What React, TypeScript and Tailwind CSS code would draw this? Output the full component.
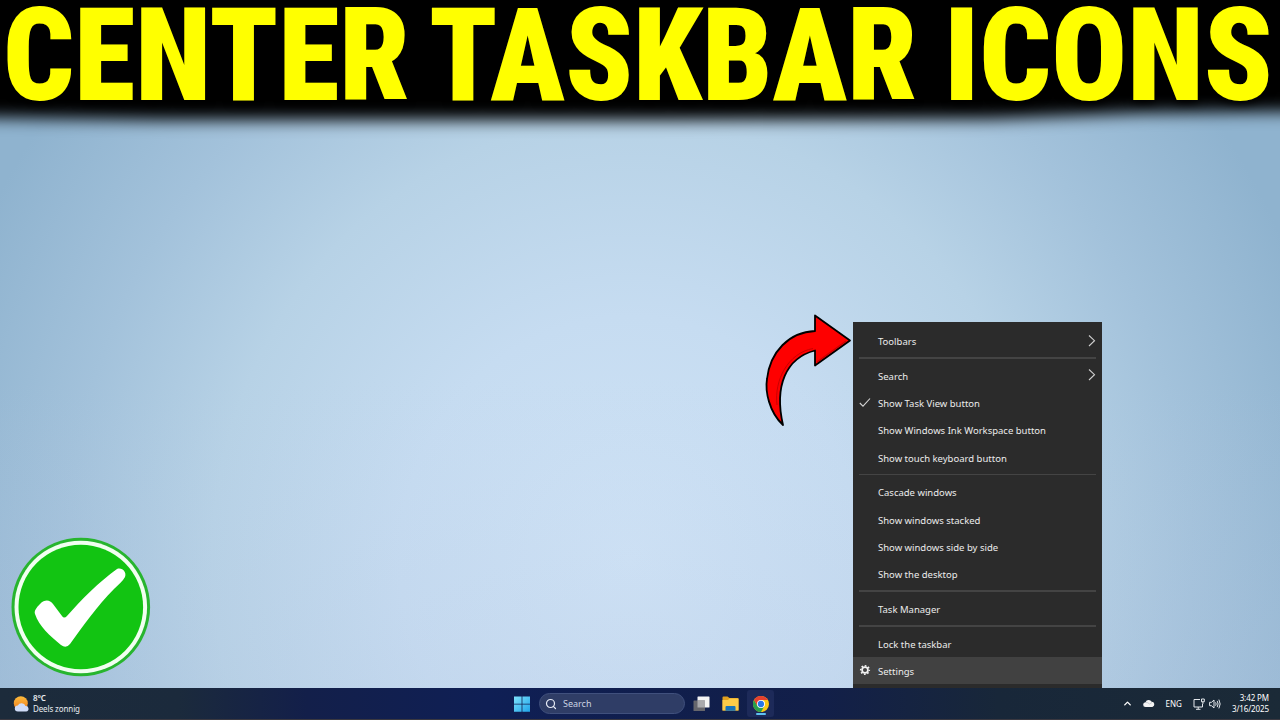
import React from 'react';
import { ChevronUp, Search } from 'lucide-react';

interface MenuEntry {
  label: string;
  submenu?: boolean;
  checked?: boolean;
  active?: boolean;
}

const MENU_GROUPS: MenuEntry[][] = [
  [{ label: 'Toolbars', submenu: true }],
  [
    { label: 'Search', submenu: true },
    { label: 'Show Task View button', checked: true },
    { label: 'Show Windows Ink Workspace button' },
    { label: 'Show touch keyboard button' },
  ],
  [
    { label: 'Cascade windows' },
    { label: 'Show windows stacked' },
    { label: 'Show windows side by side' },
    { label: 'Show the desktop' },
  ],
  [{ label: 'Task Manager' }],
  [{ label: 'Lock the taskbar' }, { label: 'Settings', active: true }],
];

const GearIcon = () => (
  <svg width="12" height="12" viewBox="0 0 12 12" fill="none" stroke="#f2f2f2">
    <circle cx="6" cy="6" r="2.9" strokeWidth="1.7" />
    <circle cx="6" cy="6" r="4.3" strokeWidth="1.6" strokeDasharray="1.69 1.69" strokeDashoffset="0.84" />
  </svg>
);

const TickIcon = () => (
  <svg width="12" height="12" viewBox="0 0 12 12" fill="none" stroke="#d4d4d4" strokeWidth="1.1">
    <path d="M.8 6 L4 9.200 L11 1.500" />
  </svg>
);

const MenuRow: React.FC<{ entry: MenuEntry }> = ({ entry }) => (
  <div className={`flex h-[27.3px] items-center pr-[5px] ${entry.active ? 'bg-[#414141]' : ''}`}>
    <span className="flex w-[25px] shrink-0 items-center pl-[6px]">
      {entry.checked && <TickIcon />}
      {entry.active && <GearIcon />}
    </span>
    <span className="flex-1 pt-[2.2px] text-[9.5px] leading-none text-[#ececec]">{entry.label}</span>
    {entry.submenu && (
      <svg width="10" height="14" viewBox="0 0 10 14" fill="none" stroke="#cfcfcf" strokeWidth="1.1">
        <path d="M2 1.500 L7.500 6.700 L2 12" />
      </svg>
    )}
  </div>
);

const ContextMenu = () => (
  <div className="absolute left-[853px] top-[322px] h-[366px] w-[249px] bg-[#2b2b2b] pt-[5px]">
    {MENU_GROUPS.map((group, i) => (
      <React.Fragment key={i}>
        {i > 0 && (
          <div className="flex h-[7.4px] items-center px-[6px]">
            <div className="h-[1.5px] w-full bg-[#444444]" />
          </div>
        )}
        {group.map((entry) => (
          <MenuRow key={entry.label} entry={entry} />
        ))}
      </React.Fragment>
    ))}
  </div>
);

const CurvedArrow = () => (
  <svg className="absolute left-[760px] top-[308px]" width="96" height="122" viewBox="760 308 96 122">
    <path
      d="M783 425 C769 412 765 391 767 379 C770 352 789 332 815 331 L815 315.500 L850 340.500 L815 365.500 L815 350.500 C786 358 774 386 783 425 Z"
      fill="#fe0000"
      stroke="#000"
      strokeWidth="1.8"
      strokeLinejoin="round"
    />
    <path d="M777 405 C774 380 788 353 813 348.500" fill="none" stroke="#c90000" strokeWidth="1" />
    <path d="M817 362 L846 341" fill="none" stroke="#c90000" strokeWidth="1.2" />
  </svg>
);

const CheckBadge = () => (
  <svg className="absolute left-[11px] top-[537px]" width="140" height="140" viewBox="0 0 140 140">
    <circle cx="69.800" cy="70" r="69.300" fill="#27b52e" />
    <circle cx="69.800" cy="70" r="66.300" fill="#f1fff0" />
    <circle cx="69.800" cy="70" r="62.300" fill="#12c412" />
    <path
      d="M24 77 C23 74 25 71 29 67 C34 62 39 63 42 67 L51 79 Q53 82 56 79 C71 62 88 45 106 32 C111 30 116 35 114 40 C112 44 107 48 103 52 C86 69 72 89 59 107 Q55 112 50 108 C39 99 28 89 24 77 Z"
      fill="#fff"
    />
  </svg>
);

const WeatherIcon = () => (
  <svg width="16" height="16" viewBox="0 0 16 16">
    <defs>
      <linearGradient id="sun" x1="0" y1="0" x2="0" y2="1">
        <stop offset="0" stopColor="#fdbb3c" />
        <stop offset="1" stopColor="#ee7a1b" />
      </linearGradient>
    </defs>
    <circle cx="7.800" cy="7.300" r="7" fill="url(#sun)" />
    <path d="M4.800 15.500 a3 3 0 0 1 0-6 a4.200 4.200 0 0 1 7.700.6 a2.700 2.700 0 0 1 .6 5.400 Z" fill="#cfdcf8" />
  </svg>
);

const WindowsLogo = () => (
  <svg width="16" height="16" viewBox="0 0 16 16">
    <defs>
      <linearGradient id="win" x1="0" y1="0" x2="1" y2="1">
        <stop offset="0" stopColor="#7fe3fb" />
        <stop offset="1" stopColor="#1fa4ea" />
      </linearGradient>
    </defs>
    <path d="M0 .5H7.600V7.700H0Z M8.400 .5H16V7.700H8.400Z M0 8.500H7.600V15.700H0Z M8.400 8.500H16V15.700H8.400Z" fill="url(#win)" />
  </svg>
);

const TaskViewIcon = () => (
  <svg width="17" height="16" viewBox="0 0 17 16">
    <rect x="4.500" y="0.500" width="12" height="11" rx="0.600" fill="#f4f4f4" />
    <rect x="0.500" y="4.500" width="11.500" height="10.500" rx="0.600" fill="#66666c" />
    <rect x="4.500" y="4.500" width="7.500" height="7" fill="#a9a9ac" />
  </svg>
);

const FolderIcon = () => (
  <svg width="17" height="16" viewBox="0 0 17 16">
    <path d="M0.500 1.500 Q0.500 .5 1.500 .5 H5.500 L7.500 2 H15.500 Q16.500 2 16.500 3 V14.500 H0.500 Z" fill="#e0a01f" />
    <path d="M0.500 4 H6 L7.500 2.500 H16.500 V14.500 H0.500 Z" fill="#fccb48" />
    <path d="M3.500 14.800 V11 Q3.500 10 4.500 10 H12.500 Q13.500 10 13.500 11 V14.800 Z" fill="#1673ba" />
  </svg>
);

const ChromeIcon = () => (
  <svg width="16" height="16" viewBox="0 0 48 48">
    <circle cx="24" cy="24" r="24" fill="#fbc816" />
    <path d="M3.200 12 A24 24 0 0 0 24 48 L34.400 30 H13.600 Z" fill="#28a04c" />
    <path d="M3.200 12 A24 24 0 0 1 44.800 12 H24 L13.600 30 Z" fill="#e6402f" />
    <circle cx="24" cy="24" r="12" fill="#fff" />
    <circle cx="24" cy="24" r="9.500" fill="#2877e8" />
  </svg>
);

const CloudIcon = () => (
  <svg width="12" height="9" viewBox="0 0 12 9">
    <path d="M2.600 8 a2.400 2.400 0 0 1-.1-4.800 a3.500 3.500 0 0 1 6.200-.4 a2.650 2.650 0 0 1 .7 5.200 Z" fill="#f3f3f3" />
    <path d="M2.500 3.500 Q5 3.200 6.500 5 L9 3.500" fill="none" stroke="#a9b0b8" strokeWidth="0.6" />
  </svg>
);

const NetworkIcon = () => (
  <svg width="12" height="12" viewBox="0 0 12 12" fill="none" stroke="#e4e8ec" strokeWidth="1">
    <path d="M7 1.500 H1 V9 H9.500 V6 M3 11.300 H7.500 M5.200 9 V11" />
    <path d="M8.500 1 V3.800 H11.300 V1 Z M9.900 3.500 V6" />
  </svg>
);

const SpeakerIcon = () => (
  <svg width="12" height="12" viewBox="0 0 12 12" fill="none" stroke="#e4e8ec" strokeWidth="1">
    <path d="M.6 4.300 H2.500 L5 2 V10 L2.500 7.700 H.6 Z" />
    <path d="M6.600 4.300 Q7.700 6 6.600 7.700 M8.200 2.900 Q10 6 8.200 9.100 M9.900 1.600 Q12.400 6 9.900 10.400" />
  </svg>
);

const Taskbar = () => (
  <div className="flex h-8 w-full border-b border-[#3a3840] bg-[linear-gradient(90deg,#1c2b3b_0%,#1b2a3c_14%,#131f4a_24%,#0f1f55_38%,#101e4c_52%,#121f49_64%,#182739_78%,#1b2a37_100%)] text-white">
    <div className="flex w-[514px] gap-[4px] pl-[13px] pt-2">
      <WeatherIcon />
      <div className="-mt-[3px] text-[8px] leading-[10.5px] tracking-[-0.12px] text-[#e8ecf0]">
        <div className="text-[8px] font-semibold">8°C</div>
        <div>Deels zonnig</div>
      </div>
    </div>

    <div className="flex w-[260px] items-center">
      <WindowsLogo />
      <div className="ml-[9px] flex h-[21px] w-[146px] items-center rounded-full border border-[#40507d] bg-[#2f3d66] pl-[5px]">
        <Search size={12} strokeWidth={2.4} className="text-[#e8ecf6]" />
        <span className="pl-[6px] text-[9px] leading-none text-[#ccd3e2]">Search</span>
      </div>
      <div className="ml-[8px]"><TaskViewIcon /></div>
      <div className="ml-[12px]"><FolderIcon /></div>
      <div className="ml-[8px] flex h-[27px] w-[27px] flex-col items-center rounded-[3px] bg-[#1d2a59] pt-[6px]">
        <ChromeIcon />
        <div className="mt-px h-[2px] w-[10px] shrink-0 rounded-full bg-[#5fc1f2]" />
      </div>
    </div>

    <div className="flex flex-1 items-center justify-end pr-[11px]">
      <ChevronUp size={11} strokeWidth={3} />
      <div className="ml-[10px]"><CloudIcon /></div>
      <span className="ml-[11px] text-[8px] leading-none">ENG</span>
      <div className="ml-[11px]"><NetworkIcon /></div>
      <div className="ml-[4px]"><SpeakerIcon /></div>
      <div className="ml-[11px] text-right text-[8px] leading-[10.5px] tracking-[-0.1px]">
        <div>3:42 PM</div>
        <div>3/16/2025</div>
      </div>
    </div>
  </div>
);

export default function App() {
  return (
    <div className="relative flex h-[720px] w-[1280px] flex-col overflow-hidden bg-[radial-gradient(ellipse_720px_760px_at_630px_560px,#cfe3f6_0%,#c6dcf1_32%,#b7d2e6_58%,#a3c2db_78%,#8fb3cf_100%)] font-['Noto_Sans',sans-serif]">
      <div className="flex flex-1 flex-col bg-[linear-gradient(180deg,transparent_55%,rgba(184,198,226,0.2)_100%)]">
        <header className="relative h-[104px] w-full">
          {/* soft black band behind the title, a little shallower on the right */}
          <div className="absolute -left-10 -top-10 h-[160px] w-[1360px] blur-[8px]">
            <div className="h-full w-full bg-black [clip-path:polygon(0_0,100%_0,100%_151px,1180px_153px,1030px_159px,700px_160px,200px_160px,0_157px)]" />
          </div>
          <h1 className="relative flex whitespace-nowrap font-['Roboto_Condensed',sans-serif] text-[130.4px] font-black leading-[112px] text-[#ffff00] [text-shadow:0_2px_10px_#000]">
            <span className="ml-[3px] w-[426px] origin-left scale-x-[0.956]">CENTER</span>
            <span className="w-[517px] origin-left scale-x-[0.948]">TASKBAR</span>
            <span className="origin-left scale-x-[0.965]">ICONS</span>
          </h1>
        </header>
      </div>
      <Taskbar />
      <CheckBadge />
      <CurvedArrow />
      <ContextMenu />
    </div>
  );
}
